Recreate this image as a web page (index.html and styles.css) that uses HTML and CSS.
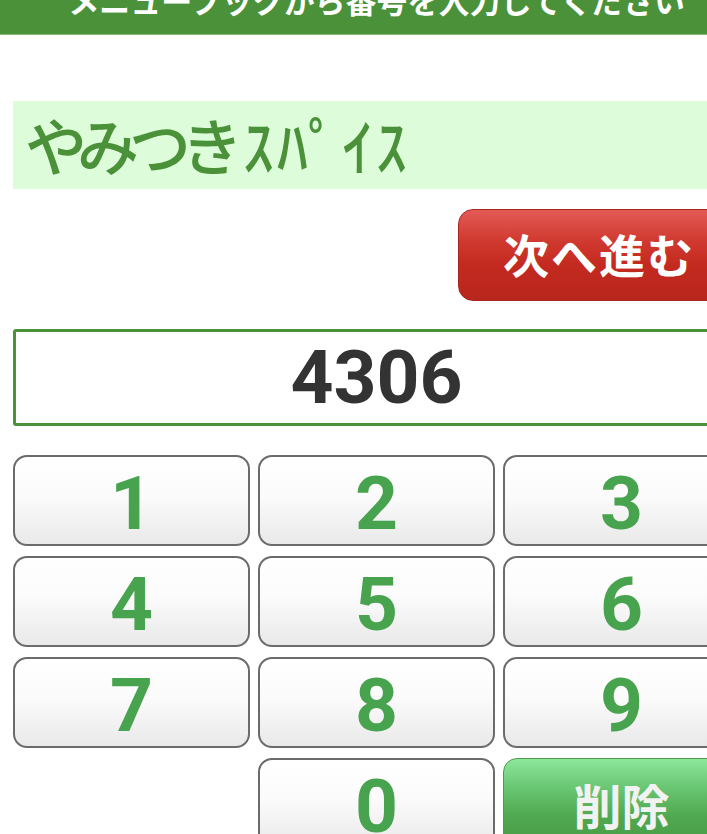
FILE: index.html
```html
<!DOCTYPE html>
<html lang="ja">
<head>
<meta charset="utf-8">
<link rel="stylesheet" href="styles.css">
</head>
<body>
<div class="page">
  <header class="topbar">メニューブックから番号を入力してください</header>
  <main class="content">
    <div class="title-band"><span class="title-full">やみつき</span><span class="title-half">ｽﾊﾟｲｽ</span></div>
    <div class="next-row">
      <button class="next-btn">次へ進む</button>
    </div>
    <div class="display">4306</div>
    <div class="keypad">
      <button class="key">1</button>
      <button class="key">2</button>
      <button class="key">3</button>
      <button class="key">4</button>
      <button class="key">5</button>
      <button class="key">6</button>
      <button class="key">7</button>
      <button class="key">8</button>
      <button class="key">9</button>
      <div class="key-spacer"></div>
      <button class="key">0</button>
      <button class="key key-delete">削除</button>
    </div>
  </main>
</div>
</body>
</html>
```

FILE: styles.css
```css
html, body {
  margin: 0;
  padding: 0;
  background: #ffffff;
  overflow: hidden;
}
body {
  font-family: "Noto Sans CJK JP", "Noto Sans", sans-serif;
}
.page {
  width: 753px;
}
.topbar {
  margin-top: -16px;
  background: #4a9139;
  color: #ffffff;
  font-size: 31px;
  font-weight: 700;
  line-height: 31px;
  text-align: center;
  padding-bottom: 19px;
  border-bottom: 1px solid #86b97a;
}
.content {
  padding: 0 13px;
  display: flex;
  flex-direction: column;
}
.title-band {
  margin-top: 66px;
  height: 88px;
  background: #ddfcd9;
  color: #4a9139;
  font-size: 62px;
  font-weight: 500;
  line-height: 86px;
  padding-left: 12px;
  white-space: nowrap;
}
.title-full {
  letter-spacing: -10px;
}
.title-half {
  margin-left: 10px;
  letter-spacing: 3px;
}
.next-row {
  margin-top: 20px;
  display: flex;
  justify-content: flex-end;
}
.next-btn {
  width: 282px;
  height: 92px;
  border: 1px solid #a8261c;
  border-radius: 15px;
  background: linear-gradient(to bottom, #e35a55 0%, #d0392f 35%, #c42a20 60%, #b8261c 100%);
  color: #ffffff;
  font-family: "Noto Sans CJK JP", sans-serif;
  font-size: 46px;
  font-weight: 700;
  padding: 0 0 4px 0;
  letter-spacing: 2px;
}
.display {
  margin-top: 28px;
  height: 91px;
  border: 3px solid #4a9139;
  border-radius: 3px;
  color: #333333;
  font-family: Roboto, "Liberation Sans", sans-serif;
  font-size: 75px;
  font-weight: 700;
  line-height: 91px;
  text-align: center;
}
.keypad {
  margin-top: 29px;
  display: grid;
  grid-template-columns: repeat(3, 237px);
  grid-auto-rows: 91px;
  column-gap: 8px;
  row-gap: 10px;
}
.key {
  border: 2.5px solid #6b6b6b;
  border-radius: 14px;
  background: linear-gradient(to bottom, #ffffff 0%, #fbfbfb 45%, #e9e9e9 100%);
  color: #48a34e;
  font-family: Roboto, "Liberation Sans", sans-serif;
  font-size: 75px;
  font-weight: 700;
  line-height: 1;
  padding: 6px 0 0 0;
}
.key-delete {
  border: 1px solid #4f9a4a;
  background: linear-gradient(to bottom, #8ee79b 0%, #66c36f 35%, #4fa84f 65%, #489b45 100%);
  color: #f2f2f2;
  font-family: "Noto Sans CJK JP", sans-serif;
  font-size: 48px;
  padding: 0;
}
```
